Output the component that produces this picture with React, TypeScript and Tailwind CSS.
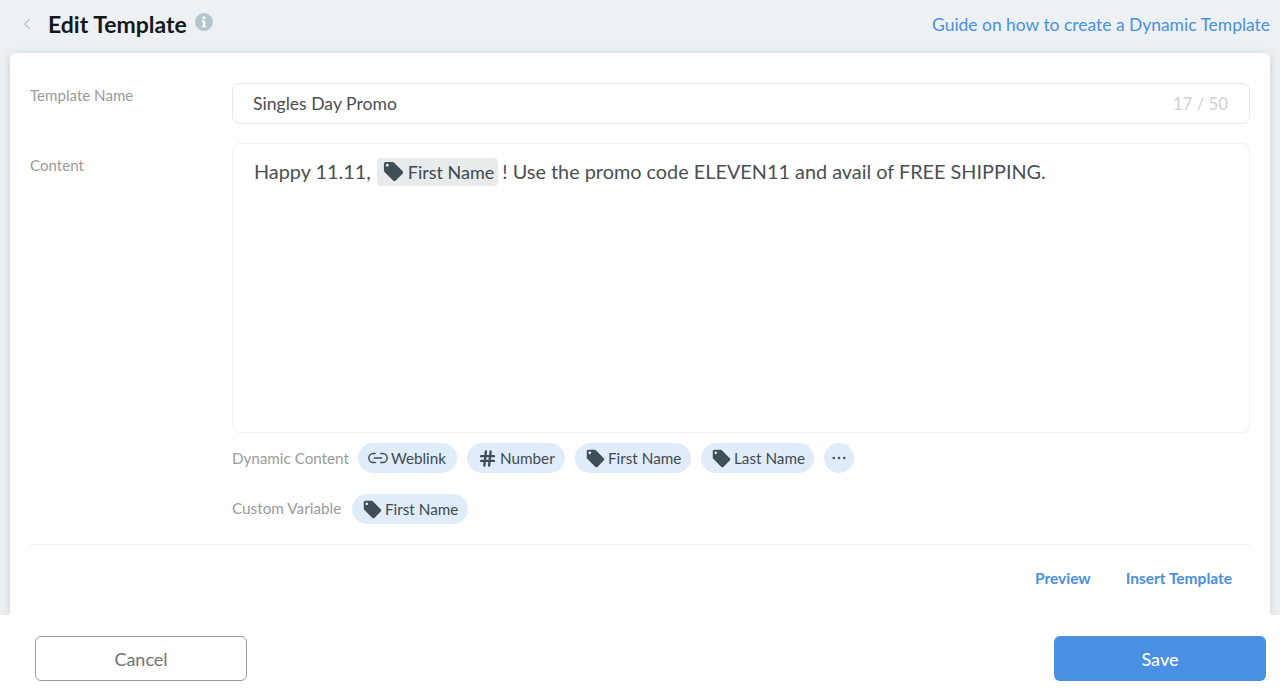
import { ChevronLeft, Link2, Hash, MoreHorizontal } from "lucide-react";

function TagIcon({ className }: { className: string }) {
  return (
    <svg viewBox="0 0 24 24" className={className} fill="#3f4f56">
      <path d="M21.4 11.6 12.4 2.6C12 2.2 11.5 2 11 2H4C2.9 2 2 2.9 2 4v7c0 .55.22 1.05.59 1.42l9 9c.36.36.86.58 1.41.58s1.05-.22 1.41-.59l7-7c.37-.36.59-.86.59-1.41s-.23-1.06-.6-1.4ZM5.5 7C4.67 7 4 6.33 4 5.5S4.67 4 5.5 4 7 4.67 7 5.5 6.33 7 5.5 7Z" />
    </svg>
  );
}

function InfoDot() {
  return (
    <svg viewBox="0 0 18 18" className="mb-[3px] ml-[8px] h-[18px] w-[18px]">
      <circle cx="9" cy="9" r="9" fill="#b4c6cc" />
      <circle cx="9" cy="4.8" r="1.5" fill="#fff" />
      <path d="M6.8 7.4h3.4v5.2h1.2v1.6H6.8v-1.6H8V9H6.8Z" fill="#fff" />
    </svg>
  );
}

function Chip({ label, icon, className }: { label: string; icon: "tag" | "link" | "hash"; className: string }) {
  return (
    <div className={`flex h-[30px] items-center rounded-full bg-[#e1ecfa] text-[15.25px] text-[#3f4a50] ${className}`}>
      {icon === "tag" && <TagIcon className="mr-[2px] h-[21px] w-[21px]" />}
      {icon === "link" && <Link2 className="mr-[2px] h-[22px] w-[22px] text-[#3f4f56]" strokeWidth={1.6} />}
      {icon === "hash" && <Hash className="mr-[3px] h-[19px] w-[19px] text-[#3f4f56]" strokeWidth={3} />}
      <span className="pt-[1px]">{label}</span>
    </div>
  );
}

export default function App() {
  return (
    <div className="flex h-[696px] w-[1280px] flex-col overflow-hidden bg-[#edf1f3] font-['Lato','Liberation_Sans',sans-serif]">
      <div className="flex h-[53px] shrink-0 items-center justify-between pb-[5px] pl-[18px] pr-[10px]">
        <div className="mb-[1px] flex items-center">
          <ChevronLeft className="h-[18px] w-[18px] text-[#b4c3c9]" strokeWidth={1.5} />
          <h1 className="ml-[12px] text-[23px] font-bold leading-[30px] text-[#14191c]">Edit Template</h1>
          <InfoDot />
        </div>
        <a className="pt-[2px] text-[17.45px] text-[#4a90e2]">Guide on how to create a Dynamic Template</a>
      </div>

      <div className="mx-[10px] flex h-[562px] shrink-0 flex-col rounded-t-[6px] bg-white px-[20px] pt-[30px] shadow-[0_2px_10px_rgba(90,110,120,0.25)]">
        <div className="flex">
          <div className="w-[202px] pt-[3px] text-[15.1px] leading-[18px] text-[#9b9b9b]">Template Name</div>
          <div className="flex h-[41px] w-[1018px] items-center justify-between rounded-[8px] border border-[#e6e8e9] pl-[20px] pr-[20px]">
            <span className="pt-[1px] text-[17.6px] text-[#4a4f52]">Singles Day Promo</span>
            <span className="pr-[1px] text-[16.8px] text-[#cfd2d3]">17 / 50</span>
          </div>
        </div>

        <div className="mt-[19px] flex">
          <div className="w-[202px] pt-[13px] text-[15.1px] leading-[18px] text-[#9b9b9b]">Content</div>
          <div className="h-[290px] w-[1018px] rounded-[8px] border border-[#f0f1f2] pl-[21px] pt-[13px]">
            <div className="flex h-[29px] items-center whitespace-nowrap text-[19.85px] text-[#4a4f52]">
              <span className="pt-[1px]">Happy 11.11,</span>
              <span className="ml-[6px] mr-[4px] flex h-[28px] items-center rounded-[4px] bg-[#e7ebec] pl-[5px] pr-[4px] text-[18px] text-[#3f4a50]">
                <TagIcon className="mr-[3px] h-[23px] w-[23px]" />
                <span className="pt-[2px]">First Name</span>
              </span>
              <span className="pt-[1px]">! Use the promo code ELEVEN11 and avail of FREE SHIPPING.</span>
            </div>
          </div>
        </div>

        <div className="mt-[10px] flex items-center pl-[202px]">
          <span className="w-[126px] text-[15.2px] text-[#9b9b9b]">Dynamic Content</span>
          <div className="flex gap-[10px]">
            <Chip label="Weblink" icon="link" className="w-[99px] pl-[9px]" />
            <Chip label="Number" icon="hash" className="w-[98px] pl-[11px]" />
            <Chip label="First Name" icon="tag" className="w-[116px] pl-[10px]" />
            <Chip label="Last Name" icon="tag" className="w-[113px] pl-[10px]" />
            <div className="flex h-[30px] w-[30px] items-center justify-center rounded-full bg-[#e1ecfa]">
              <MoreHorizontal className="h-[18px] w-[18px] text-[#3f4f56]" strokeWidth={1.5} />
            </div>
          </div>
        </div>

        <div className="mt-[21px] flex items-center pl-[202px]">
          <span className="mb-[1px] w-[120px] text-[15.3px] text-[#9b9b9b]">Custom Variable</span>
          <Chip label="First Name" icon="tag" className="w-[116px] pl-[10px]" />
        </div>

        <div className="mt-[20px] border-t border-[#edf1f3]" />

        <div className="flex justify-end gap-[35px] pr-[18px] pt-[23px] text-[15.5px] font-bold leading-[20px] text-[#4a90e2]">
          <a>Preview</a>
          <a>Insert Template</a>
        </div>
      </div>

      <div className="flex flex-1 items-start justify-between bg-white pl-[35px] pr-[14px] pt-[21px]">
        <button className="h-[45px] w-[212px] rounded-[6px] border border-[#9b9b9b] bg-white pt-[1px] text-[18px] text-[#6f7477]">Cancel</button>
        <button className="h-[45px] w-[212px] rounded-[6px] bg-[#4a90e2] pt-[1px] text-[18px] font-medium text-white">Save</button>
      </div>
    </div>
  );
}
